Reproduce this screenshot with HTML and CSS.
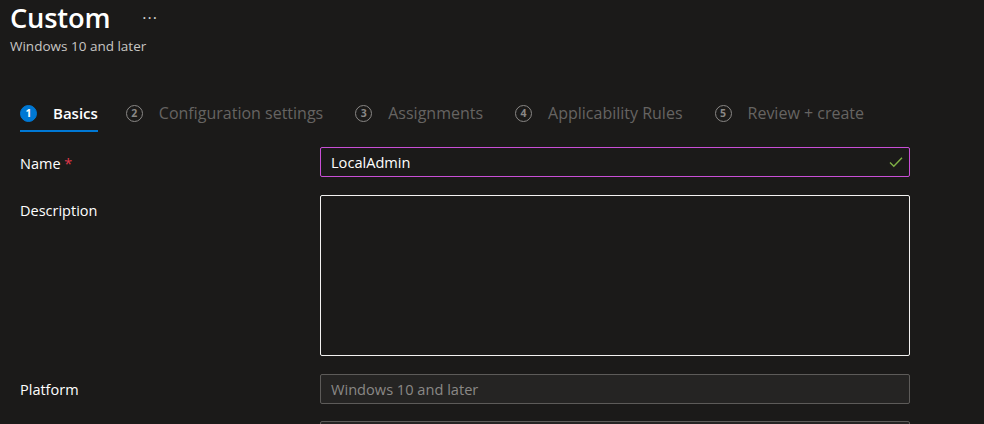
FILE: index.html
```html
<!DOCTYPE html>
<html>
<head>
<meta charset="utf-8">
<link rel="stylesheet" href="styles.css">
</head>
<body>
<div class="page">
  <header class="head">
    <div class="title-row">
      <h1 class="title">Custom</h1>
      <span class="more">···</span>
    </div>
    <div class="subtitle">Windows 10 and later</div>
  </header>

  <nav class="steps">
    <div class="step active"><span class="num">1</span><span class="label">Basics</span></div>
    <div class="step"><span class="num">2</span><span class="label">Configuration settings</span></div>
    <div class="step"><span class="num">3</span><span class="label">Assignments</span></div>
    <div class="step"><span class="num">4</span><span class="label">Applicability Rules</span></div>
    <div class="step"><span class="num">5</span><span class="label">Review + create</span></div>
  </nav>

  <form class="form">
    <div class="row">
      <label class="lbl">Name <span class="req">*</span></label>
      <div class="field name-field">
        <span class="value">LocalAdmin</span>
        <svg class="check" width="14" height="12" viewBox="0 0 14 12"><path d="M1 6.5 L4.8 10.2 L13 1.8" fill="none" stroke="#7fb045" stroke-width="1.4"/></svg>
      </div>
    </div>
    <div class="row row-desc">
      <label class="lbl">Description</label>
      <div class="field textarea"></div>
    </div>
    <div class="row row-platform">
      <label class="lbl">Platform</label>
      <div class="field disabled"><span class="value">Windows 10 and later</span></div>
    </div>
    <div class="row row-last">
      <label class="lbl"></label>
      <div class="field disabled"></div>
    </div>
  </form>
</div>
</body>
</html>
```
FILE: styles.css
```css
html, body {
  margin: 0;
  padding: 0;
  background: #1b1a19;
  overflow: hidden;
}
body {
  font-family: "Segoe UI", "Open Sans", "Noto Sans", sans-serif;
  color: #ffffff;
  width: 984px;
  height: 424px;
}
.page {
  padding: 0 0 0 10px;
}
.head {
  height: 64px;
}
.title-row {
  display: flex;
  align-items: center;
  height: 36px;
}
.title {
  margin: 0;
  font-size: 27.3px;
  font-weight: 600;
  line-height: 36px;
  letter-spacing: -0.2px;
}
.more {
  margin-left: 32px;
  font-size: 16px;
  color: #d2d0ce;
  letter-spacing: 1px;
  line-height: 20px;
}
.subtitle {
  font-size: 13.5px;
  color: #c8c6c4;
  line-height: 18px;
  margin-top: 1px;
}
.steps {
  display: flex;
  margin-left: 10px;
  margin-top: 32px;
}
.step {
  display: flex;
  align-items: center;
  height: 34px;
  border-bottom: 2px solid transparent;
  margin-right: 32px;
}
.step .num {
  width: 15px;
  height: 15px;
  border: 1px solid #8a8886;
  border-radius: 50%;
  font-size: 10.5px;
  font-weight: 700;
  line-height: 15px;
  text-align: center;
  color: #8a8886;
  margin-right: 16px;
  flex: none;
}
.step .label {
  font-size: 16px;
  color: #666462;
  line-height: 20px;
}
.step.active {
  border-bottom-color: #0078d4;
  margin-right: 28px;
}
.step.active .num {
  background: #0078d4;
  border-color: #0078d4;
  color: #ffffff;
}
.step.active .label {
  color: #ffffff;
  font-weight: 600;
  font-size: 15px;
}
.form {
  margin-top: 15px;
  margin-left: 10px;
  display: flex;
  flex-direction: column;
}
.row {
  display: flex;
  align-items: flex-start;
}
.lbl {
  width: 300px;
  font-size: 14.5px;
  line-height: 20px;
  padding-top: 7px;
  flex: none;
}
.req {
  color: #e0384b;
}
.field {
  border: 1px solid #8a8886;
  border-radius: 2px;
  display: flex;
  align-items: center;
  padding: 0 10px;
  box-sizing: border-box;
  width: 590px;
  height: 30px;
}
.name-field {
  border-color: #c94fd6;
  justify-content: space-between;
}
.value {
  font-size: 14.6px;
  line-height: 20px;
}
.check {
  margin-right: -4px;
}
.row-desc {
  margin-top: 18px;
}
.row-desc .lbl {
  padding-top: 6px;
}
.textarea {
  height: 161px;
  border-color: #f3f2f1;
}
.row-platform {
  margin-top: 18px;
}
.row-platform .lbl {
  padding-top: 6px;
}
.disabled {
  background: #252423;
  border-color: #5d5b59;
}
.disabled .value {
  color: #8a8886;
}
.row-last {
  margin-top: 17px;
}
```
